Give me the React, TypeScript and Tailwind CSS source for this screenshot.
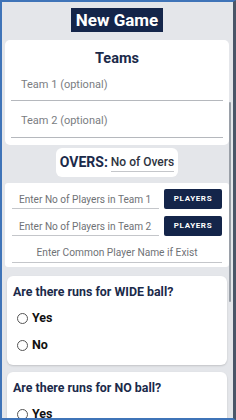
import React from 'react';

const NAVY = 'bg-[#14254a]';

function LineInput({ label, className = '' }: { label: string; className?: string }) {
  return (
    <div className={`border-b border-[#b5b8bd] text-[11px] text-[#7a7d82] ${className}`}>
      {label}
    </div>
  );
}

function PlayersRow({ label }: { label: string }) {
  return (
    <div className="flex items-end gap-[5px]">
      <div className="flex-1 border-b border-[#c4c6ca] pb-[1px] pl-[7px] text-[10.1px] text-[#6f7276]">{label}</div>
      <button className={`${NAVY} h-[20px] w-[58px] rounded-[2px] text-[8px] font-bold tracking-[0.08em] text-white`}>
        PLAYERS
      </button>
    </div>
  );
}

function Radio({ label }: { label: string }) {
  return (
    <div className="flex h-[16px] items-center gap-[4px] pl-[4px]">
      <span className="h-[11px] w-[11px] rounded-full border-[1.5px] border-[#555]" />
      <span className="text-[12.5px] font-bold text-[#111]">{label}</span>
    </div>
  );
}

function Question({ title, options }: { title: string; options: string[] }) {
  return (
    <div className="mx-[2px] rounded-[6px] bg-white px-[6px] pt-[8px] pb-[12px] shadow-[0_1px_2px_rgba(0,0,0,0.15)]">
      <div className="text-[12.4px] leading-[16px] font-bold text-[#1b2a4a]">{title}</div>
      <div className="mt-[10px] flex flex-col gap-[11px]">
        {options.map((o) => (
          <Radio key={o} label={o} />
        ))}
      </div>
    </div>
  );
}

export default function App() {
  return (
    <div
      className="relative h-[420px] w-[236px] overflow-hidden border-y-2 border-l-2 border-r-[3px] border-y-[#3f74b8] border-l-[#3f74b8] border-r-[#4a5668] bg-[#e4e6ea]"
      style={{ fontFamily: 'Roboto, "Liberation Sans", sans-serif' }}
    >
      <div className="flex flex-col px-[3px] pr-[4px]">
        <div className="flex justify-center pt-[6px]">
          <div className={`${NAVY} px-[5px] text-[17px] leading-[24px] font-bold text-white`}>New Game</div>
        </div>

        <div className="mt-[8px] rounded-[5px] bg-white px-[6px] pt-[8px] pb-[7px]">
          <div className="text-center text-[14.5px] font-bold text-[#1b2a4a]">Teams</div>
          <LineInput label="Team 1 (optional)" className="mt-[7px] pb-[7px] pl-[10px]" />
          <LineInput label="Team 2 (optional)" className="mt-[12px] pb-[7px] pl-[10px]" />
        </div>

        <div className="mt-[3px] flex justify-center">
          <div className="flex items-center gap-[3px] rounded-[6px] bg-white px-[4px] py-[4px]">
            <span className="text-[14px] font-bold text-[#1b2a4a]">OVERS:</span>
            <span className="border-b border-[#c4c6ca] text-[12px] font-medium text-[#2e3340]">No of Overs</span>
          </div>
        </div>

        <div className="mt-[6px] flex flex-col gap-[7px] rounded-[3px] bg-white px-[7px] pt-[6px] pb-[4px]">
          <PlayersRow label="Enter No of Players in Team 1" />
          <PlayersRow label="Enter No of Players in Team 2" />
          <div className="mt-[2px] border-b border-[#c4c6ca] pb-[2px] text-center text-[10.2px] text-[#6f7276]">
            Enter Common Player Name if Exist
          </div>
        </div>

        <div className="mt-[9px] flex flex-col gap-[7px]">
          <Question title="Are there runs for WIDE ball?" options={['Yes', 'No']} />
          <Question title="Are there runs for NO ball?" options={['Yes', 'No']} />
        </div>
      </div>
      <div className="absolute top-[100px] right-[2px] h-[200px] w-[2px] rounded bg-[#9aa0a8]" />
    </div>
  );
}
